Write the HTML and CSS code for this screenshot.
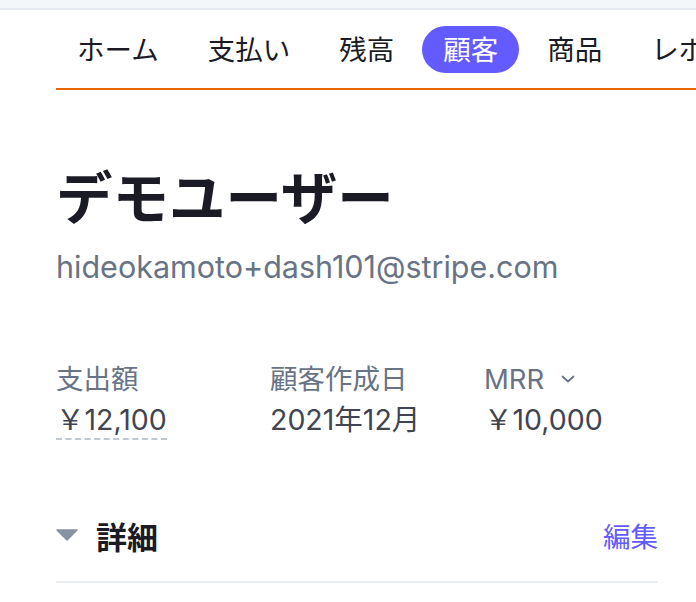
FILE: index.html
```html
<!DOCTYPE html>
<html lang="ja">
<head>
<meta charset="utf-8">
<title>顧客</title>
<link rel="stylesheet" href="styles.css">
</head>
<body>
<div class="topbar"></div>
<nav class="tabs">
  <span class="tab">ホーム</span>
  <span class="tab">支払い</span>
  <span class="tab">残高</span>
  <span class="tab active">顧客</span>
  <span class="tab">商品</span>
  <span class="tab">レポート</span>
</nav>
<main class="content">
  <h1 class="title">デモユーザー</h1>
  <div class="email">hideokamoto+dash101@stripe.com</div>
  <div class="stats">
    <div class="stat">
      <div class="label">支出額</div>
      <div class="value"><span class="dashed">￥12,100</span></div>
    </div>
    <div class="stat">
      <div class="label">顧客作成日</div>
      <div class="value">2021年12月</div>
    </div>
    <div class="stat">
      <div class="label">MRR <svg class="chev" width="14" height="10" viewBox="0 0 14 10"><path d="M1.5 2.5 L7 7.5 L12.5 2.5" fill="none" stroke="#687385" stroke-width="1.8" stroke-linecap="round" stroke-linejoin="round"/></svg></div>
      <div class="value">￥10,000</div>
    </div>
  </div>
  <div class="section-head">
    <div class="section-title">
      <svg class="caret" width="22" height="12" viewBox="0 0 22 12"><path d="M1 1 H21 L11 11 Z" fill="#8792a2" stroke="#8792a2" stroke-width="1.5" stroke-linejoin="round"/></svg>
      <span>詳細</span>
    </div>
    <a class="edit">編集</a>
  </div>
  <div class="divider"></div>
</main>
</body>
</html>
```
FILE: styles.css
```css
html, body {
  margin: 0;
  padding: 0;
  background: #ffffff;
  overflow: hidden;
}
body {
  font-family: Inter, "Noto Sans CJK JP", sans-serif;
  color: #1a1b25;
  width: 696px;
}
.topbar {
  height: 8px;
  background: #f4f7fa;
  border-bottom: 2px solid #e6eaef;
}
.tabs {
  margin-left: 56px;
  padding-top: 16px;
  padding-bottom: 15px;
  border-bottom: 2px solid #e8650a;
  display: flex;
  gap: 7px;
  white-space: nowrap;
  overflow: hidden;
  font-family: "Noto Sans CJK JP", sans-serif;
}
.tab {
  flex: none;
  height: 47px;
  line-height: 45px;
  padding: 0 21px;
  font-size: 27.5px;
  color: #1a1b25;
  border-radius: 24px;
}
.tab.active {
  background: #635bff;
  color: #ffffff;
}
.content {
  margin: 0 38px 0 56px;
}
.title {
  margin: 72px 0 0;
  font-size: 56.5px;
  line-height: 64px;
  font-weight: 700;
  font-family: "Noto Sans CJK JP", sans-serif;
  color: #1a1b25;
}
.email {
  margin-top: 22px;
  font-size: 30.5px;
  line-height: 38px;
  color: #687385;
}
.stats {
  margin-top: 75px;
  display: grid;
  grid-template-columns: 214px 214px auto;
}
.label {
  font-size: 27.5px;
  line-height: 36px;
  color: #687385;
  display: flex;
  align-items: center;
  gap: 17px;
}
.value {
  margin-top: 5px;
  font-size: 28.5px;
  line-height: 36px;
  color: #414552;
}
.dashed {
  border-bottom: 2px dashed #c0c8d2;
  padding-bottom: 1px;
}
.section-head {
  margin-top: 77px;
  display: flex;
  justify-content: space-between;
  align-items: center;
  height: 40px;
}
.section-title {
  display: flex;
  align-items: center;
  gap: 18px;
  font-size: 31px;
  font-weight: 700;
  font-family: "Noto Sans CJK JP", sans-serif;
  color: #1a1b25;
}
.caret {
  display: block;
}
.edit {
  font-size: 27.5px;
  color: #635bff;
  font-family: "Noto Sans CJK JP", sans-serif;
}
.divider {
  margin-top: 26px;
  height: 2px;
  background: #ebeef1;
}
```
